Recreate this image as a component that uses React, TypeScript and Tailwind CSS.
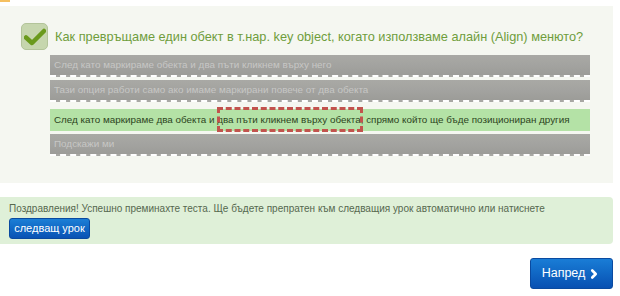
import { ChevronRight } from "lucide-react";

const answers = [
  { text: "След като маркираме обекта и два пъти кликнем върху него", correct: false },
  { text: "Тази опция работи само ако имаме маркирани повече от два обекта", correct: false },
  { text: "", correct: true },
  { text: "Подскажи ми", correct: false },
];

function Check() {
  return (
    <div className="w-[27px] h-[27px] shrink-0 rounded-[5px] bg-[#c6d6ae] border border-[#b3c49a] flex items-center justify-center">
      <svg width="22" height="18" viewBox="0 0 22 18">
        <path d="M2 9.5 L8 15 L20 3" fill="none" stroke="#6a9a1c" strokeWidth="4.5" strokeLinecap="round" strokeLinejoin="round" />
      </svg>
    </div>
  );
}

export default function App() {
  return (
    <div className="w-[620px] h-[296px] bg-white overflow-hidden font-['Liberation_Sans',Arial,sans-serif]">
      <div className="h-[6px] relative">
        <div className="absolute left-0 top-0 w-[10px] h-[2px] bg-[#f5c060]" />
      </div>

      <div className="w-[613px] h-[177px] bg-[#f5f7f1] pt-[17px]">
        <div className="flex items-start gap-[7px] pl-[21px]">
          <Check />
          <p className="mt-[6px] text-[12.75px] leading-[16px] text-[#6f9d3c] whitespace-nowrap">
            Как превръщаме един обект в т.нар. key object, когато използваме алайн (Align) менюто?
          </p>
        </div>

        <div className="ml-[50px] w-[540px] mt-[5px] flex flex-col">
          {answers.map((a, i) =>
            a.correct ? (
              <div
                key={i}
                className="relative h-[22px] mt-[4px] mb-[3px] bg-[#b4e2a6] pl-[4px] flex items-center text-[9.85px] text-[#2c4420] whitespace-nowrap"
              >
                След като маркираме два обекта и два пъти кликнем върху обекта, спрямо който ще бъде позициониран другия
                <div className="absolute left-[167px] top-[-2px] w-[146px] h-[25px] border-[3px] border-dashed border-[#c2534d]" />
              </div>
            ) : (
              <div
                key={i}
                className="h-[22px] mb-[3px] bg-gradient-to-b from-[#a9a9a5] via-[#a3a3a0] to-[#9c9c98] border-b-2 border-dashed border-white pl-[4px] flex items-center text-[9.9px] text-white/40 whitespace-nowrap"
              >
                {a.text}
              </div>
            )
          )}
        </div>
      </div>

      <div className="mt-[14px] w-[613px] h-[47px] bg-[#dff0d8] rounded-r-[4px] pl-[9px] pt-[6px]">
        <p className="text-[10px] leading-[12px] text-[#56684f] whitespace-nowrap">
          Поздравления! Успешно преминахте теста. Ще бъдете препратен към следващия урок автоматично или натиснете
        </p>
        <button className="mt-[1px] w-[81px] h-[21px] rounded-[3px] bg-gradient-to-b from-[#1c7fd6] to-[#0a52b4] border border-[#0a4aa0] text-white text-[11px] leading-none">
          следващ урок
        </button>
      </div>

      <div className="flex justify-end w-[613px] mt-[14px]">
        <button className="w-[83px] h-[31px] rounded-[3px] bg-gradient-to-b from-[#1a7dd6] to-[#0950b2] border border-[#0a4aa0] text-white text-[12.5px] flex items-center justify-center gap-[2px]">
          Напред
          <ChevronRight size={14} strokeWidth={4.5} />
        </button>
      </div>
    </div>
  );
}
